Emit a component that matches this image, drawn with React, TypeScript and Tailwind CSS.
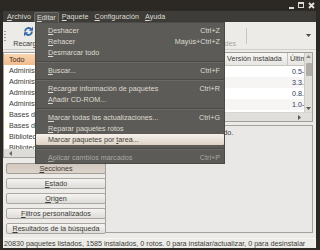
import React from "react";

type MenuItem =
  | { label: string; u?: number; keys?: string; active?: boolean; disabled?: boolean }
  | "sep";

const editMenu: MenuItem[] = [
  { label: "Deshacer", keys: "Ctrl+Z" },
  { label: "Rehacer", keys: "Mayús+Ctrl+Z" },
  { label: "Desmarcar todo" },
  "sep",
  { label: "Buscar...", keys: "Ctrl+F" },
  "sep",
  { label: "Recargar información de paquetes", keys: "Ctrl+R" },
  { label: "Añadir CD-ROM..." },
  "sep",
  { label: "Marcar todas las actualizaciones...", keys: "Ctrl+G" },
  { label: "Reparar paquetes rotos" },
  { label: "Marcar paquetes por tarea...", u: 20, active: true },
  "sep",
  { label: "Aplicar cambios marcados", keys: "Ctrl+P", disabled: true },
];

const sections = [
  "Todo",
  "Administración del sistema",
  "Administración del sistema (multiverse)",
  "Administración del sistema (restricted)",
  "Administración del sistema (universe)",
  "Bases de datos",
  "Bases de datos (multiverse)",
  "Bibliotecas",
  "Bibliotecas - antiguas",
];

const filters = [
  "Secciones",
  "Estado",
  "Origen",
  "Filtros personalizados",
  "Resultados de la búsqueda",
];

const versions = ["0.5-1", "3.3.1-2", "0.8.1-1", "1.0-4"];

// mnemonic: underline one letter
function Mn({ t, i = 0 }: { t: string; i?: number }) {
  return (
    <>
      {t.slice(0, i)}
      <span className="underline decoration-1 underline-offset-[1px]">{t[i]}</span>
      {t.slice(i + 1)}
    </>
  );
}

// small scrollbar arrow
function Arrow({ dir, color }: { dir: "up" | "down" | "left" | "right"; color: string }) {
  const pts = {
    up: "0,4 2.5,1 5,4",
    down: "0,1 2.5,4 5,1",
    left: "4,0 1,2.5 4,5",
    right: "1,0 4,2.5 1,5",
  }[dir];
  return (
    <svg width="5" height="5" viewBox="0 0 5 5" className="shrink-0">
      <polygon points={pts} fill={color} />
    </svg>
  );
}

function ReloadIcon() {
  return (
    <svg width="11" height="11" viewBox="0 0 16 16">
      <path d="M13 8a5 5 0 0 1-8.6 3.5" stroke="#3465a4" strokeWidth="2.6" fill="none" />
      <path d="M3 8a5 5 0 0 1 8.6-3.5" stroke="#3465a4" strokeWidth="2.6" fill="none" />
      <path d="M14.5 1v6h-6z" fill="#3465a4" />
      <path d="M1.5 15V9h6z" fill="#3465a4" />
    </svg>
  );
}

export default function App() {
  return (
    <div className="relative flex h-[250px] w-[320px] flex-col overflow-hidden bg-[#2c2925] font-['Liberation_Sans',Arial,sans-serif] text-[7.2px] leading-none text-[#3c3b37]">
      {/* title bar */}
      <div className="flex h-[11px] items-center justify-end gap-[3px] pr-[5px]">
        <svg width="6" height="6" viewBox="0 0 6 6" className="mt-[3px]">
          <rect x="0" y="3" width="5" height="2" fill="#dcdad5" />
        </svg>
        <svg width="7" height="7" viewBox="0 0 7 7">
          <rect x="0.5" y="0.5" width="5" height="5" fill="none" stroke="#dcdad5" />
          <rect x="0.5" y="0.5" width="5" height="1.5" fill="#dcdad5" />
        </svg>
        <svg width="7" height="7" viewBox="0 0 7 7">
          <path d="M1 1l5 5M6 1l-5 5" stroke="#e6e4df" strokeWidth="1.8" />
        </svg>
      </div>

      <div className="ml-[3px] mr-[4px] flex h-[237px] flex-col bg-[#ecebe8]">
        {/* menu bar */}
        <div className="flex h-[11px] items-stretch bg-[#3d3c38] pl-[1px] text-[#dfdbd2]">
          {[
            ["Archivo", false],
            ["Editar", true],
            ["Paquete", false],
            ["Configuración", false],
            ["Ayuda", false],
          ].map(([t, on]) => (
            <div
              key={t as string}
              className={
                on
                  ? "mt-[1px] flex items-center rounded-t-[2px] border border-b-0 border-[#6c6b66] bg-[#504f4b] px-[2px]"
                  : "flex items-center px-[3px]"
              }
            >
              <Mn t={t as string} />
            </div>
          ))}
        </div>

        {/* toolbar */}
        <div className="flex h-[28px] items-center border-b border-[#d3d0cb]">
          <div className="ml-[1px] flex h-[10px] w-[3px] flex-col justify-between">
            {[0, 1, 2, 3].map((d) => (
              <div key={d} className="h-[1px] w-[2px] bg-[#9c9994]" />
            ))}
          </div>
          <div className="ml-[5px] flex w-[32px] flex-col items-center gap-[3px] pt-[2px]">
            <ReloadIcon />
            <span>Recargar</span>
          </div>
          <div className="ml-[2px] flex w-[70px] flex-col items-center gap-[3px] pt-[2px] text-[#3c3b37]">
            <div className="h-[11px] w-[11px]" />
            <span>Marcar todas</span>
          </div>
          <div className="flex w-[40px] flex-col items-center gap-[3px] pt-[2px] text-[#a8a6a1]">
            <div className="h-[11px] w-[11px]" />
            <span>Aplicar</span>
          </div>
          <div className="ml-[36px] flex w-[48px] flex-col items-center gap-[3px] pt-[2px] text-[#a8a6a1]">
            <div className="h-[11px] w-[11px]" />
            <span>Propiedades</span>
          </div>
          <div className="ml-[6px] h-[16px] w-[1px] bg-[#c9c6c1]" />
          <div className="flex flex-1 justify-end pr-[5px]">
            <Arrow dir="down" color="#4a4945" />
          </div>
        </div>

        {/* main */}
        <div className="flex h-[186px]">
          {/* left column */}
          <div className="flex w-[101px] shrink-0 flex-col pt-[2px]">
            <div className="flex h-[106px] flex-col border border-[#a29f9a] bg-white">
              <div className="flex-1 overflow-hidden pt-[1px]">
                {sections.map((s, i) => (
                  <div
                    key={s}
                    className={
                      i === 0
                        ? "flex h-[11px] items-center whitespace-nowrap bg-gradient-to-b from-[#f9d5b2] to-[#f1bb8d] pl-[5px] text-[#3a2a1e]"
                        : "flex h-[11px] items-center whitespace-nowrap pl-[5px]"
                    }
                  >
                    {s}
                  </div>
                ))}
              </div>
              <div className="flex h-[8px] items-center bg-[#dedcd8] pl-[4px]">
                <Arrow dir="left" color="#6a6864" />
              </div>
            </div>
            <div className="ml-[3px] mr-[-2px] mt-[5px] flex flex-col gap-[4px]">
              {filters.map((f, i) => (
                <div
                  key={f}
                  className={
                    i === 0
                      ? "flex h-[11px] items-center justify-center rounded-[2px] border border-[#a39c95] bg-gradient-to-b from-[#d2c8bf] to-[#ddd4cb]"
                      : "flex h-[11px] items-center justify-center rounded-[2px] border border-[#aaa7a2] bg-gradient-to-b from-[#f5f4f2] to-[#dfdcd8]"
                  }
                >
                  <Mn t={f} />
                </div>
              ))}
            </div>
          </div>

          {/* right column */}
          <div className="ml-[1px] mr-[3px] flex min-w-0 flex-1 flex-col pt-[2px]">
            <div className="flex h-[70px] flex-col border border-[#a29f9a] bg-white">
              <div className="flex h-[59px]">
                <div className="flex min-w-0 flex-1 flex-col overflow-hidden">
                  <div className="flex h-[13px] border-b border-[#c8c5c0] bg-gradient-to-b from-[#f7f6f5] to-[#e7e5e2]">
                    <div className="w-[19px] shrink-0 border-r border-[#c8c5c0]" />
                    <div className="flex w-[100px] shrink-0 items-center border-r border-[#c8c5c0] pl-[2px]">Paquete</div>
                    <div className="flex w-[63px] shrink-0 items-center border-r border-[#c8c5c0] pl-[2px]">Versión instalada</div>
                    <div className="flex min-w-0 flex-1 items-center overflow-hidden whitespace-nowrap pl-[2px]">Última versión</div>
                  </div>
                  {versions.map((v, i) => (
                    <div key={v} className={i % 2 ? "flex h-[11px] bg-[#f6f5f4]" : "flex h-[11px]"}>
                      <div className="w-[182px] shrink-0" />
                      <div className="flex min-w-0 flex-1 items-center overflow-hidden whitespace-nowrap pl-[4px] text-[#2f3b5e]">{v}</div>
                    </div>
                  ))}
                </div>
                <div className="flex w-[8px] shrink-0 flex-col items-center border-l border-[#cfccc7] bg-[#e1dfdb] py-[1px]">
                  <Arrow dir="up" color="#8a8883" />
                  <div className="mt-[4px] h-[13px] w-[6px] rounded-[1px] bg-[#aeaba6]" />
                  <div className="mt-auto">
                    <Arrow dir="down" color="#5a5854" />
                  </div>
                </div>
              </div>
              <div className="flex h-[9px] items-center justify-end border-t border-[#d8d6d2] bg-[#e1dfdb] pr-[10px]">
                <Arrow dir="right" color="#5a5854" />
              </div>
            </div>
            <div className="mt-[3px] h-[108px] border border-[#a5a29d] bg-[#e9e8e6] px-[7px] pt-[3px]">
              No hay ningún paquete seleccionado.
            </div>
          </div>
        </div>

        {/* status bar */}
        <div className="flex h-[12px] items-end">
          <div className="flex h-[10px] flex-1 items-center border-r border-t border-[#f8f7f6] pl-[1px]">
            20830 paquetes listados, 1585 instalados, 0 rotos. 0 para instalar/actualizar, 0 para desinstalar
          </div>
        </div>
      </div>

      {/* open Editar menu */}
      <div className="absolute left-[35px] top-[22px] w-[190px] border border-[#4b4a46] bg-[#5c5b57] pt-[2px] text-[#dfdbd2]">
        {editMenu.map((it, i) =>
          it === "sep" ? (
            <div key={i} className="flex h-[7px] items-center">
              <div className="h-[2px] w-full border-t border-b border-t-[#4a4945] border-b-[#6a6965]" />
            </div>
          ) : (
            <div
              key={i}
              className={
                it.active
                  ? "flex h-[11px] items-center justify-between rounded-[1px] bg-gradient-to-b from-[#f6f1eb] to-[#ded2c5] pl-[12px] pr-[4px] text-[#3c3b37]"
                  : it.disabled
                    ? "flex h-[11px] items-center justify-between pl-[12px] pr-[4px] text-[#a9a7a2]"
                    : "flex h-[11px] items-center justify-between pl-[12px] pr-[4px]"
              }
            >
              <span>
                <Mn t={it.label} i={it.u ?? 0} />
              </span>
              {it.keys && <span>{it.keys}</span>}
            </div>
          ),
        )}
      </div>
    </div>
  );
}
